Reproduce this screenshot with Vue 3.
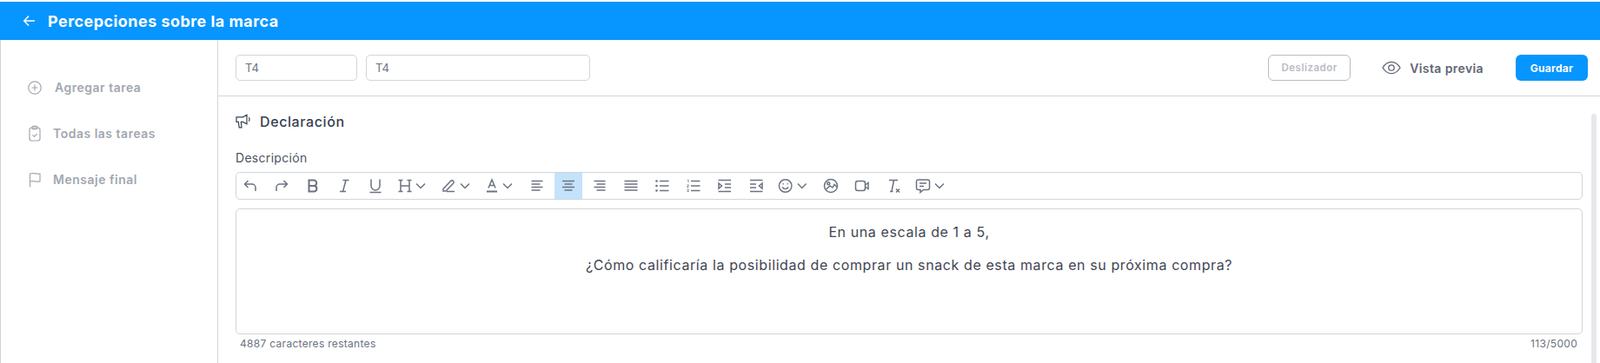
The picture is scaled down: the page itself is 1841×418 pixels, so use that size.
<template>
  <div class="page">
    <header class="top">
      <svg class="back" width="18" height="18" viewBox="0 0 18 18"><path d="M15 9H3M8 3.500L2.800 9 8 14.500" /></svg>
      <h1>Percepciones sobre la marca</h1>
    </header>

    <div class="body">
      <aside class="side">
        <div class="side-item first">
          <svg class="side-icon" width="18" height="18" viewBox="0 0 18 18"><circle cx="9" cy="9" r="7.200" /><path d="M9 5.600v6.800M5.600 9h6.800" /></svg>
          <span class="add-label">Agregar tarea</span>
        </div>
        <div class="side-item">
          <svg class="side-icon" width="18" height="20" viewBox="0 0 18 20"><rect x="3" y="3" width="12" height="15" rx="2.400" /><rect x="6" y="1.400" width="6" height="3.200" rx="1.200" /><path d="M6.400 11.400l2 2 3.200-3.600" /></svg>
          <span>Todas las tareas</span>
        </div>
        <div class="side-item">
          <svg class="side-icon" width="18" height="20" viewBox="0 0 18 20"><path d="M3.500 18.500V3c4-1.500 8 1 11.500 0v9c-3.500 1-7.500-1.500-11.500 0" /></svg>
          <span>Mensaje final</span>
        </div>
      </aside>

      <main class="main">
        <div class="bar">
          <input class="field short" value="T4" />
          <input class="field long" value="T4" />
          <div class="spacer"></div>
          <button class="slider-btn">Deslizador</button>
          <div class="preview">
            <svg width="22" height="16" viewBox="0 0 22 16"><path d="M1 8c2.600-4.400 6-6.600 10-6.600S18.400 3.600 21 8c-2.600 4.400-6 6.600-10 6.600S3.600 12.400 1 8z" /><circle cx="11" cy="8" r="3.200" /></svg>
            <span>Vista previa</span>
          </div>
          <button class="save">Guardar</button>
        </div>

        <div class="content-wrap">
          <section class="content">
            <div class="statement">
              <svg width="18" height="18" viewBox="0 0 18 18"><path d="M1 3.800h7.500L13 1.200v10.600L8.500 9.400H6.400l.6 6.400H4.200L3.400 9.400H1zM15.400 4.200c.8 1.400.8 3 0 4.400" /></svg>
              <span>Declaración</span>
            </div>
            <label class="desc">Descripción</label>

            <div class="toolbar">
              <button
                v-for="tool in tools"
                :key="tool.name"
                class="tool"
                :class="{ active: tool.active }"
                :style="{ width: tool.width + 'px', paddingLeft: tool.pad + 'px', gap: tool.gap + 'px' }"
              >
                <svg width="18" height="18" viewBox="0 0 18 18" v-html="tool.icon"></svg>
                <svg v-if="tool.drop" width="12" height="12" viewBox="0 0 12 12"><path d="M1 3.500l5 5 5-5" /></svg>
              </button>
            </div>

            <div class="editor">
              <p>En una escala de 1 a 5,</p>
              <p>¿Cómo calificaría la posibilidad de comprar un snack de esta marca en su próxima compra?</p>
            </div>

            <div class="counts">
              <span>4887 caracteres restantes</span>
              <span>113/5000</span>
            </div>
          </section>
          <div class="scroll"></div>
        </div>
      </main>
    </div>
  </div>
</template>

<script setup>
const lines = (rows) => rows.map((r) => `<path d="M${r[0]} ${r[2]}H${r[1]}"/>`).join('')

const tools = [
  { name: 'undo', icon: '<path d="M6.500 3L2.500 7l4 4M2.500 7H11a4 4 0 0 1 4 4v4"/>' },
  { name: 'redo', icon: '<path d="M11.500 3l4 4-4 4M15.500 7H7a4 4 0 0 0-4 4v4"/>' },
  { name: 'bold', icon: '<path class="thick" d="M4.500 2.500h5.500a3.200 3.200 0 0 1 0 6.500H4.500zM4.500 9h6.200a3.300 3.300 0 0 1 0 6.500H4.500z"/>' },
  { name: 'italic', icon: '<path d="M7.500 2.500h7M4 15.500h7M11 2.500l-3.500 13"/>' },
  { name: 'underline', icon: '<path d="M4 1.500v7.500a5 5 0 0 0 10 0V1.500M2.500 16.500h13"/>' },
  { name: 'heading', drop: true, width: 50, pad: 5, gap: 3, icon: '<path d="M4 2.500v13M14 2.500v13M4 9h10M1.500 2.500h5M11.500 2.500h5M1.500 15.500h5M11.500 15.500h5"/>' },
  { name: 'highlight', drop: true, width: 42, pad: 1, gap: 4, icon: '<path d="M3 12.500L11.500 3.500a2 2 0 0 1 3 2.800L6 15H3zM7 15.500h9"/>' },
  { name: 'color', drop: true, width: 46, pad: 5, gap: 3, icon: '<path d="M5 11.500L9 2l4 9.500M6.300 8.500h5.400"/><path class="thick" d="M3 15.500h12"/>' },
  { name: 'left', icon: lines([[2.5, 15.5, 3.5], [2.5, 12.5, 7], [2.5, 15.5, 10.5], [2.5, 12.5, 14]]) },
  { name: 'center', active: true, icon: lines([[2, 16, 3.5], [4.5, 13.5, 7], [2, 16, 10.5], [4.5, 13.5, 14]]) },
  { name: 'right', icon: lines([[2.5, 15.5, 3.5], [5.5, 15.5, 7], [2.5, 15.5, 10.5], [5.5, 15.5, 14]]) },
  { name: 'justify', icon: lines([[1.5, 16.5, 3.5], [1.5, 16.5, 7], [1.5, 16.5, 10.5], [1.5, 16.5, 14]]) },
  { name: 'bullets', icon: lines([[6, 16.5, 3.5], [6, 16.5, 9], [6, 16.5, 14.5]]) + '<circle cx="2.500" cy="3.500" r="1.300" fill="#6b7280"/><circle cx="2.500" cy="9" r="1.300" fill="#6b7280"/><circle cx="2.500" cy="14.500" r="1.300" fill="#6b7280"/>' },
  { name: 'numbers', icon: lines([[6, 16.5, 3.5], [6, 16.5, 9], [6, 16.5, 14.5]]) + '<path class="thin" d="M2 2.500l1-.500v3M1.500 8h2l-2 2.500h2M1.500 13h2l-1 1.200 1 1.300h-2"/>' },
  { name: 'indent', icon: lines([[1.5, 16, 2.5], [9, 16, 7], [9, 16, 11], [1.5, 16, 15.5]]) + '<path d="M2 6l3.500 3L2 12z"/>' },
  { name: 'outdent', icon: lines([[2, 16.5, 2.5], [2, 9, 7], [2, 9, 11], [2, 16.5, 15.5]]) + '<path d="M16 6l-3.500 3 3.500 3z"/>' },
  { name: 'emoji', drop: true, width: 46, pad: 5, gap: 5, icon: '<circle cx="9" cy="9" r="7.500"/><path d="M5.500 10.500c1.800 3 5.200 3 7 0"/><circle cx="6.500" cy="6.800" r=".8" fill="#6b7280"/><circle cx="11.500" cy="6.800" r=".8" fill="#6b7280"/>' },
  { name: 'image', icon: '<circle cx="9" cy="9" r="7.500"/><circle cx="6.300" cy="6.300" r="1.500"/><path d="M3 13.500l5-4.500 3 2 2-3.500 3.200 3"/>' },
  { name: 'video', icon: '<rect x="1.500" y="3.500" width="11" height="11" rx="2.500"/><path d="M12.500 8l3.500-2.500v7L12.500 10"/>' },
  { name: 'clear', icon: '<path d="M4 2.500h10M9.500 2.500L7 15.500M5 15.500h3.500M12 12.500l4 4M16 12.500l-4 4"/>' },
  { name: 'comment', drop: true, width: 46, pad: 5, gap: 4, icon: '<path d="M3.500 2h11A2 2 0 0 1 16.500 4v7.500a2 2 0 0 1-2 2H9.500L6 16.500v-3H3.500a2 2 0 0 1-2-2V4a2 2 0 0 1 2-2zM5 6h8M5 9.500h5"/>' },
]
</script>

<style>
html,
body {
  margin: 0;
  background: #fff;
}
</style>

<style scoped>
.page {
  height: 418px;
  box-sizing: border-box;
  padding-top: 2px;
  display: flex;
  flex-direction: column;
  font-family: Inter, "Noto Sans", sans-serif;
  color: #374151;
  overflow: hidden;
}
.top {
  height: 44px;
  flex: none;
  background: #0795ff;
  display: flex;
  align-items: center;
  padding-left: 25px;
  gap: 12px;
}
.top h1 {
  margin: 0;
  font-size: 18px;
  letter-spacing: 0.45px;
  font-weight: 700;
  color: #fff;
}
.back path {
  fill: none;
  stroke: #fff;
  stroke-width: 1.600;
}
.body {
  flex: 1;
  display: flex;
  min-height: 0;
  border-left: 1px solid #d1d5db;
}
.side {
  width: 249px;
  flex: none;
  border-right: 1px solid #d1d5db;
}
.side-item {
  height: 53px;
  display: flex;
  align-items: center;
  padding-left: 30px;
  gap: 12px;
  font-size: 14px;
  letter-spacing: 0.5px;
  font-weight: 600;
  color: #a2a7b0;
}
.side-item.first {
  margin-top: 28px;
}
.add-label {
  margin-left: 2px;
}
.side-icon {
  fill: none;
  stroke: #a2a7b0;
  stroke-width: 1.200;
}
.main {
  flex: 1;
  min-width: 0;
  display: flex;
  flex-direction: column;
}
.bar {
  height: 64px;
  flex: none;
  border-bottom: 1px solid #d1d5db;
  display: flex;
  align-items: center;
  padding: 0 14px 0 20px;
  gap: 10px;
}
.field {
  height: 30px;
  box-sizing: border-box;
  border: 1px solid #d1d5db;
  border-radius: 5px;
  padding: 0 10px;
  font: 13px Inter, sans-serif;
  color: #6b7280;
  outline: none;
}
.field.short {
  width: 140px;
}
.field.long {
  width: 258px;
}
.spacer {
  flex: 1;
}
.slider-btn {
  width: 95px;
  height: 30px;
  background: #fff;
  border: 1px solid #b8bbc2;
  border-radius: 6px;
  font: 600 11.500px Inter, sans-serif;
  letter-spacing: 0.5px;
  color: #b8bcc4;
  padding: 0;
}
.preview {
  display: flex;
  align-items: center;
  gap: 10px;
  margin-left: 26px;
  margin-right: 27px;
  font-size: 14px;
  letter-spacing: 0.4px;
  font-weight: 600;
  color: #5f6673;
}
.preview svg {
  fill: none;
  stroke: #5f6673;
  stroke-width: 1.300;
}
.save {
  width: 83px;
  height: 30px;
  background: #0795ff;
  border: none;
  border-radius: 6px;
  font: 700 12px Inter, sans-serif;
  letter-spacing: 0.3px;
  color: #fff;
  padding: 0;
}
.content-wrap {
  flex: 1;
  display: flex;
  min-height: 0;
}
.content {
  flex: 1;
  min-width: 0;
  padding-left: 20px;
}
.statement {
  height: 18px;
  margin-top: 20px;
  display: flex;
  align-items: center;
  gap: 10px;
  font-size: 16px;
  letter-spacing: 0.6px;
  font-weight: 500;
  color: #374151;
}
.statement svg {
  fill: none;
  stroke: #374151;
  stroke-width: 1.200;
}
.desc {
  display: block;
  margin-top: 23px;
  height: 19px;
  line-height: 19px;
  font-size: 14px;
  letter-spacing: 0.3px;
  color: #4b5563;
}
.toolbar {
  margin-top: 7px;
  height: 32px;
  box-sizing: border-box;
  border: 1px solid #d1d5db;
  border-radius: 5px;
  display: flex;
  align-items: center;
  gap: 4px;
}
.tool {
  width: 32px;
  height: 30px;
  padding: 0 7px;
  border: none;
  background: none;
  display: flex;
  align-items: center;
  flex: none;
}
.tool.active {
  background: #c4e3fb;
}
.tool :deep(path),
.tool :deep(rect),
.tool :deep(circle) {
  fill: none;
  stroke: #6b7280;
  stroke-width: 1.500;
}
.tool :deep(.thick) {
  stroke-width: 2;
}
.tool :deep(.thin) {
  stroke-width: 0.8;
}
.tool :deep(circle[fill]) {
  fill: #6b7280;
  stroke: none;
}
.editor {
  margin-top: 10px;
  height: 145px;
  box-sizing: border-box;
  border: 1px solid #d1d5db;
  border-radius: 5px;
  padding-top: 17px;
  text-align: center;
  font-size: 16px;
  letter-spacing: 0.6px;
  color: #3f4652;
}
.editor p {
  margin: 0 0 19px;
  line-height: 19px;
}
.counts {
  display: flex;
  justify-content: space-between;
  margin-top: 2px;
  padding: 0 6px 0 5px;
  font-size: 12px;
  letter-spacing: 0.3px;
  line-height: 18px;
  color: #6b7280;
}
.scroll {
  width: 6px;
  flex: none;
  margin: 20px 4px 0 10px;
  background: #e5e7eb;
  border-radius: 3px 3px 0 0;
}
</style>
